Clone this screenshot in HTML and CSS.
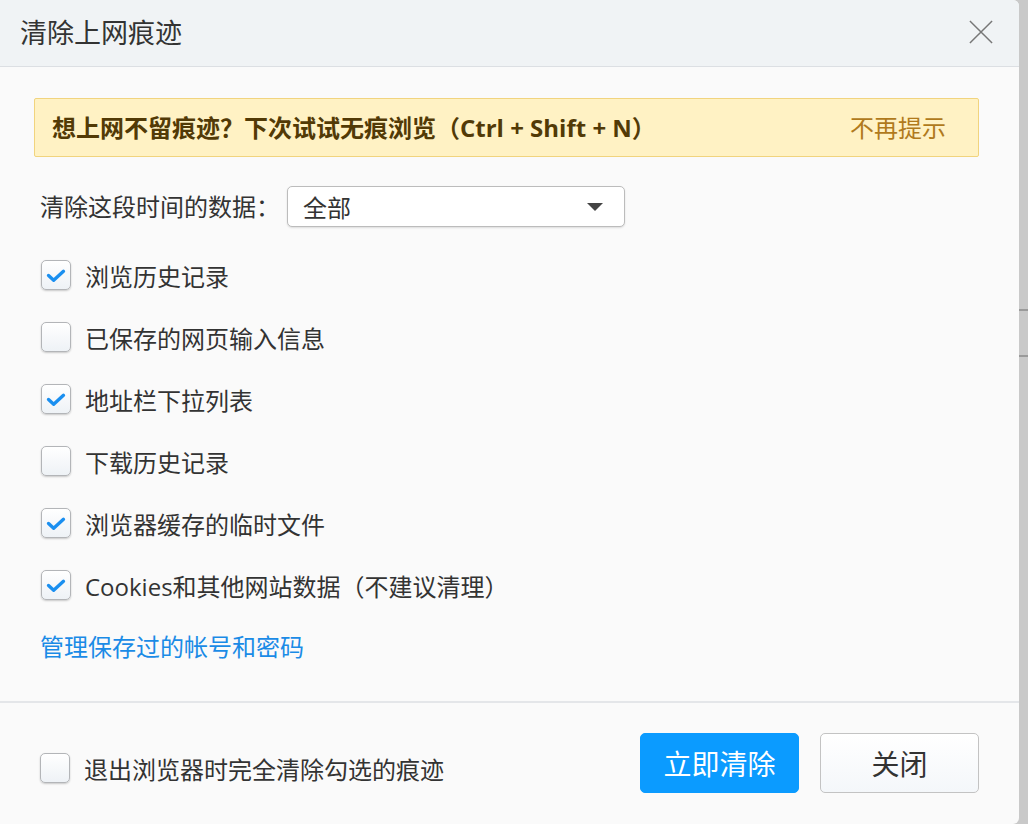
FILE: index.html
```html
<!DOCTYPE html>
<html lang="zh-CN">
<head>
    <meta charset="UTF-8">
    <meta name="viewport" content="width=device-width, initial-scale=1.0">
    <title>清除上网痕迹</title>
    <link rel="stylesheet" href="styles.css">
</head>
<body>
    <div class="dialog">
        <div class="dialog-header">
            <span class="dialog-title">清除上网痕迹</span>
            <span class="close-btn">
                <svg width="26" height="26" viewBox="0 0 26 26"><path d="M1 1L25 25M25 1L1 25" stroke="#777" stroke-width="1.6" fill="none"/></svg>
            </span>
        </div>

        <div class="dialog-body">
            <div class="tip">
                <span class="tip-text">想上网不留痕迹？下次试试无痕浏览（Ctrl + Shift + N）</span>
                <a class="tip-close">不再提示</a>
            </div>

            <div class="range-row">
                <span class="range-label">清除这段时间的数据：</span>
                <div class="select">
                    <span>全部</span>
                    <span class="arrow"></span>
                </div>
            </div>

            <ul class="options">
                <li class="option checked"><span class="box"><svg viewBox="0 0 30 30"><path d="M7 15.5L12.5 20.5L23 11" /></svg></span>浏览历史记录</li>
                <li class="option"><span class="box"></span>已保存的网页输入信息</li>
                <li class="option checked"><span class="box"><svg viewBox="0 0 30 30"><path d="M7 15.5L12.5 20.5L23 11" /></svg></span>地址栏下拉列表</li>
                <li class="option"><span class="box"></span>下载历史记录</li>
                <li class="option checked"><span class="box"><svg viewBox="0 0 30 30"><path d="M7 15.5L12.5 20.5L23 11" /></svg></span>浏览器缓存的临时文件</li>
                <li class="option checked"><span class="box"><svg viewBox="0 0 30 30"><path d="M7 15.5L12.5 20.5L23 11" /></svg></span>Cookies和其他网站数据（不建议清理）</li>
            </ul>

            <a class="manage-link">管理保存过的帐号和密码</a>
        </div>

        <div class="dialog-footer">
            <div class="option exit-option"><span class="box"></span>退出浏览器时完全清除勾选的痕迹</div>
            <button class="btn btn-primary">立即清除</button>
            <button class="btn">关闭</button>
        </div>
    </div>
    <div class="backdrop-edge">
        <span class="edge-line"></span>
        <span class="edge-line"></span>
    </div>
</body>
</html>
```

FILE: styles.css
```css
body {
    margin: 0;
    height: 824px;
    display: flex;
    background: #c9c9c9;
    font-family: "Open Sans", "Noto Sans CJK SC", sans-serif;
    color: #333;
    overflow: hidden;
}
.dialog {
    width: 1019px;
    height: 824px;
    background: #fafafa;
    border-radius: 0 6px 6px 0;
    display: flex;
    flex-direction: column;
    overflow: hidden;
}
.dialog-header {
    height: 66px;
    background: #f0f3f5;
    border-bottom: 1px solid #dcdfe3;
    display: flex;
    align-items: center;
    justify-content: space-between;
    padding: 0 26px 0 20px;
}
.dialog-title {
    font-size: 27px;
    line-height: 1;
    margin-top: -1px;
}
.close-btn {
    display: flex;
    width: 24px;
    height: 24px;
    margin-top: -3px;
}
.close-btn svg {
    width: 24px;
    height: 24px;
}
.dialog-body {
    padding: 31px 40px 0 34px;
    flex: 1;
    border-bottom: 2px solid #e4e6e9;
}
.tip {
    height: 57px;
    background: #fff2c4;
    border: 1px solid #f1d47e;
    border-radius: 2px;
    display: flex;
    align-items: center;
    justify-content: space-between;
    padding: 0 32px 0 17px;
}
.tip-text {
    font-size: 24px;
    font-weight: bold;
    color: #523a06;
    line-height: 1;
}
.tip-close {
    font-size: 24px;
    color: #b07a1c;
    line-height: 1;
    cursor: pointer;
}
.range-row {
    display: flex;
    align-items: center;
    margin-top: 29px;
    padding-left: 6px;
}
.range-label {
    font-size: 24px;
    line-height: 1;
}
.select {
    box-sizing: border-box;
    width: 338px;
    height: 41px;
    margin-left: 7px;
    border: 1px solid #bcbcbc;
    border-radius: 5px;
    background: #fff;
    box-shadow: 0 1px 2px rgba(0, 0, 0, 0.12);
    display: flex;
    align-items: center;
    justify-content: space-between;
    padding: 0 21px 0 15px;
    font-size: 24px;
}
.arrow {
    width: 0;
    height: 0;
    border-left: 8px solid transparent;
    border-right: 8px solid transparent;
    border-top: 8px solid #444;
}
.options {
    list-style: none;
    margin: 17px 0 0 0;
    padding: 0 0 0 7px;
}
.option {
    height: 62px;
    display: flex;
    align-items: center;
    font-size: 24px;
}
.box {
    width: 28px;
    height: 28px;
    border: 1px solid #b3b5b8;
    border-radius: 5px;
    background: linear-gradient(#fff, #eef2f6);
    box-shadow: 0 1px 2px rgba(0, 0, 0, 0.2);
    margin-right: 14px;
    flex-shrink: 0;
}
.box svg {
    display: block;
    width: 28px;
    height: 28px;
    fill: none;
    stroke: #1a8ff0;
    stroke-width: 3.6;
    stroke-linecap: round;
    stroke-linejoin: round;
}
.manage-link {
    display: block;
    font-size: 24px;
    line-height: 62px;
    color: #1a8be6;
    padding-left: 6px;
    cursor: pointer;
}
.dialog-footer {
    height: 121px;
    display: flex;
    align-items: flex-start;
    padding: 30px 40px 0 40px;
    box-sizing: border-box;
}
.exit-option {
    height: 30px;
    margin-top: 20px;
    flex: 1;
}
.btn {
    width: 159px;
    height: 60px;
    border: 1px solid #c3c3c3;
    border-radius: 5px;
    background: linear-gradient(#fff, #f4f7fa);
    font-family: inherit;
    font-size: 28px;
    color: #333;
    margin-left: 21px;
    cursor: pointer;
}
.btn-primary {
    background: #0b9bff;
    border-color: #0b9bff;
    color: #fff;
}
.backdrop-edge {
    flex: 1;
    display: flex;
    flex-direction: column;
    padding-top: 309px;
}
.edge-line {
    height: 2px;
    background: #9a9a9a;
    margin-bottom: 44px;
}
```
